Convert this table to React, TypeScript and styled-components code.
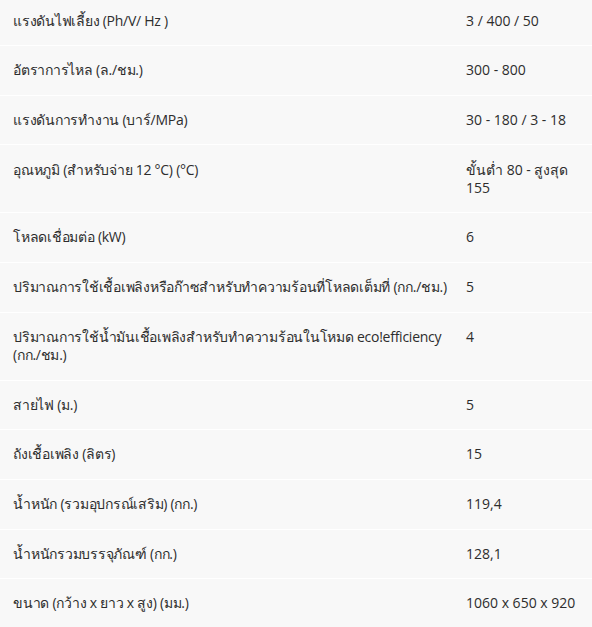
import { Fragment } from "react";
import styled, { createGlobalStyle } from "styled-components";

const GlobalStyle = createGlobalStyle`
  html, body {
    margin: 0;
    padding: 0;
    background: #f8f8f8;
  }
  body {
    font-family: "Open Sans", "Noto Sans", "DejaVu Sans", sans-serif;
    color: #2d2d2d;
  }
`;

// label lines are split where the original table breaks them
type Spec = { label: string[]; value: string };

const specs: Spec[] = [
  { label: ["แรงดันไฟเลี้ยง (Ph/V/ Hz )"], value: "3 / 400 / 50" },
  { label: ["อัตราการไหล (ล./ชม.)"], value: "300 - 800" },
  { label: ["แรงดันการทำงาน (บาร์/MPa)"], value: "30 - 180 / 3 - 18" },
  { label: ["อุณหภูมิ (สำหรับจ่าย 12 °C) (°C)"], value: "ขั้นต่ำ 80 - สูงสุด 155" },
  { label: ["โหลดเชื่อมต่อ (kW)"], value: "6" },
  {
    label: ["ปริมาณการใช้เชื้อเพลิงหรือก๊าซสำหรับทำความร้อนที่โหลดเต็มที่ (กก./ชม.)"],
    value: "5",
  },
  {
    label: ["ปริมาณการใช้น้ำมันเชื้อเพลิงสำหรับทำความร้อนในโหมด eco!efficiency", "(กก./ชม.)"],
    value: "4",
  },
  { label: ["สายไฟ (ม.)"], value: "5" },
  { label: ["ถังเชื้อเพลิง (ลิตร)"], value: "15" },
  { label: ["น้ำหนัก (รวมอุปกรณ์เสริม) (กก.)"], value: "119,4" },
  { label: ["น้ำหนักรวมบรรจุภัณฑ์ (กก.)"], value: "128,1" },
  { label: ["ขนาด (กว้าง x ยาว x สูง) (มม.)"], value: "1060 x 650 x 920" },
];

const Table = styled.table`
  width: 100%;
  border-collapse: collapse;
  table-layout: fixed;
  font-size: 14px;
  line-height: 18.3px;
`;

const Row = styled.tr`
  border-bottom: 1px solid #ffffff;

  &:last-child {
    border-bottom: none;
  }
`;

const Cell = styled.td<{ $first: boolean }>`
  padding: ${({ $first }) => ($first ? "11.5px" : "15.2px")} 13px 15.2px;
  vertical-align: top;
  text-align: left;
`;

const LabelCell = styled(Cell)`
  width: 427px;
  white-space: nowrap;
  letter-spacing: -0.25px;
`;

export default function App() {
  return (
    <>
      <GlobalStyle />
      <Table>
        <tbody>
          {specs.map((s, i) => (
            <Row key={i}>
              <LabelCell $first={i === 0}>
                {s.label.map((line, li) => (
                  <Fragment key={li}>
                    {li > 0 && <br />}
                    {line}
                  </Fragment>
                ))}
              </LabelCell>
              <Cell $first={i === 0}>{s.value}</Cell>
            </Row>
          ))}
        </tbody>
      </Table>
    </>
  );
}
